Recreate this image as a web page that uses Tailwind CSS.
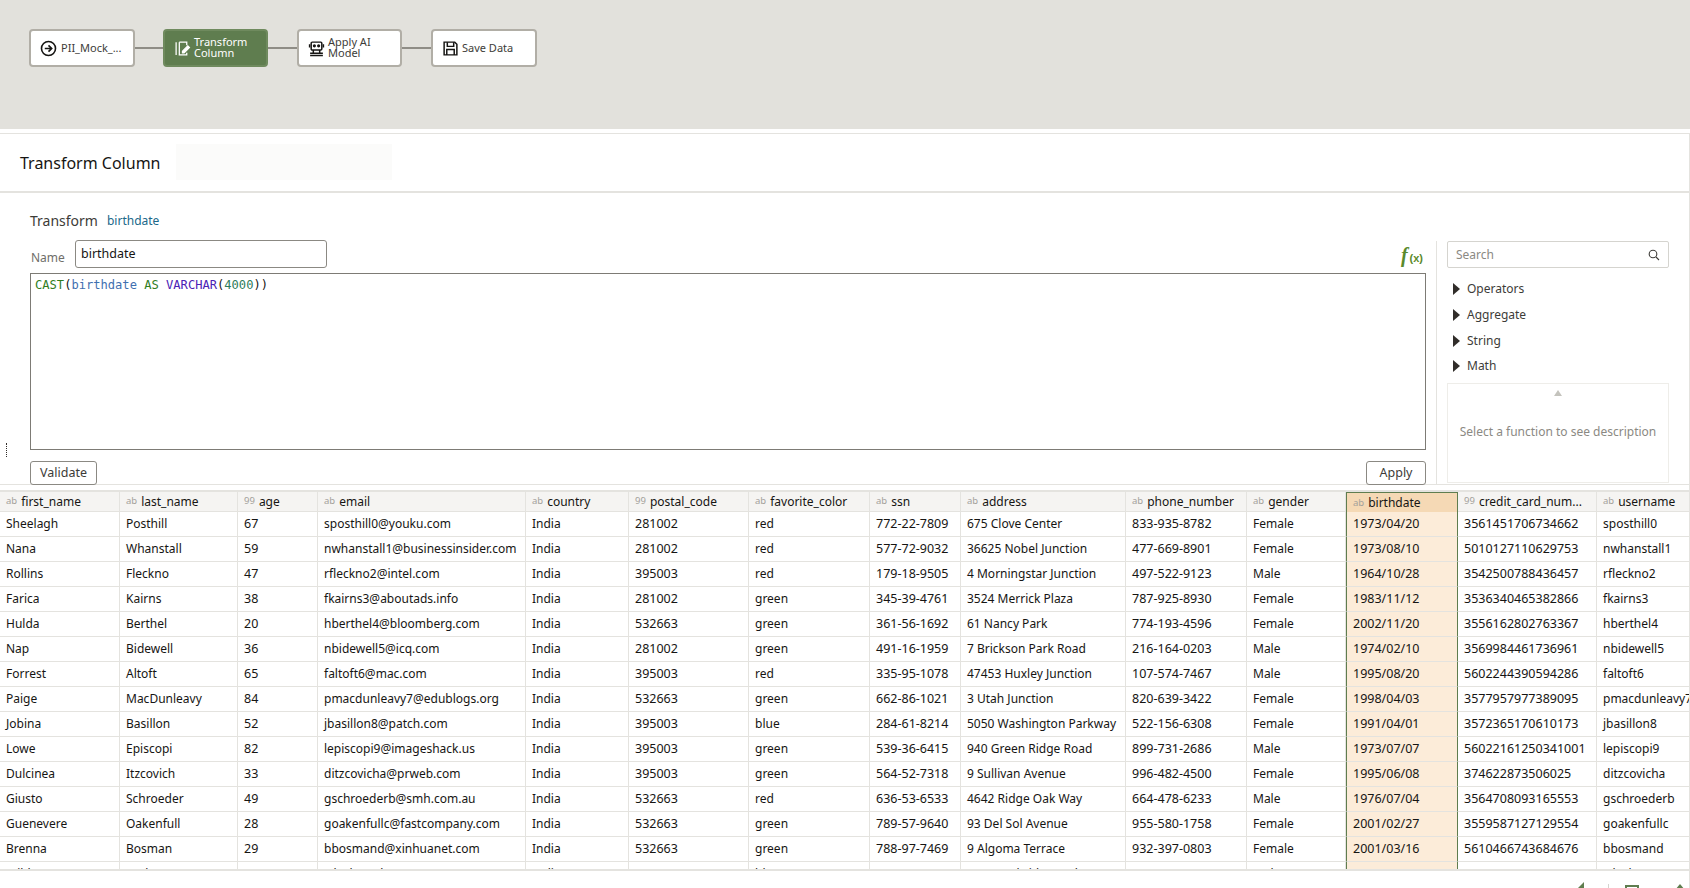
<!DOCTYPE html>
<html lang="en">
<head>
  <meta charset="UTF-8" />
  <title>Transform Column</title>
  <script src="https://cdn.jsdelivr.net/npm/@tailwindcss/browser@4"></script>
</head>
<body class="h-[888px] w-[1690px] overflow-hidden bg-white font-['Noto_Sans',sans-serif] text-[#161513]">

  <!-- Flow canvas -->
  <section class="flex h-[129px] items-start bg-[#e2e1dc] pl-[29px] pt-[29px]">
    <div class="flex h-[38px] w-[106px] items-center gap-[4px] rounded-[4px] border-2 border-[#b1aea6] bg-white pl-[9px] text-[11px] text-[#3d3c38]">
      <svg class="h-[17px] w-[17px] shrink-0" viewBox="0 0 16 16" fill="none" stroke="#161513" stroke-width="1.5"><circle cx="8" cy="8" r="6.6"/><path d="M4.5 8h6.5M8 5l3 3-3 3"/></svg>
      <span class="pt-px">PII_Mock_...</span>
    </div>
    <div class="mt-[18px] h-[2px] w-[28px] bg-[#8f8d86]"></div>
    <div class="flex h-[38px] w-[105px] items-center gap-[3px] rounded-[4px] border-2 border-[#6f8a5e] bg-[#5f7d4f] pl-[9px] text-[11px] leading-[11px] text-white">
      <svg class="h-[17px] w-[17px] shrink-0" viewBox="0 0 16 16" fill="none" stroke="#fff" stroke-width="1.2"><path d="M2 2v12M5 2h7v3M5 2v12h7v-2"/><path d="M8 10.5l5-5 1.5 1.5-5 5H8z" fill="#fff"/></svg>
      <span class="pb-[2px]">Transform<br />Column</span>
    </div>
    <div class="mt-[18px] h-[2px] w-[29px] bg-[#8f8d86]"></div>
    <div class="flex h-[38px] w-[105px] items-center gap-[3px] rounded-[4px] border-2 border-[#b1aea6] bg-white pl-[9px] text-[11px] leading-[11px] text-[#3d3c38]">
      <svg class="h-[17px] w-[17px] shrink-0" viewBox="0 0 16 16" fill="none" stroke="#161513" stroke-width="1.4"><rect x="3" y="2" width="10" height="7.5" rx="1"/><path d="M1.5 4v3M14.5 4v3M5 9.5v3h6v-3M2 14.5h12M2 12.5h12"/><circle cx="6" cy="5.5" r=".8" fill="#161513"/><circle cx="10" cy="5.5" r=".8" fill="#161513"/></svg>
      <span class="pb-[2px]">Apply AI<br />Model</span>
    </div>
    <div class="mt-[18px] h-[2px] w-[29px] bg-[#8f8d86]"></div>
    <div class="flex h-[38px] w-[106px] items-center gap-[3px] rounded-[4px] border-2 border-[#b1aea6] bg-white pl-[9px] text-[11px] text-[#3d3c38]">
      <svg class="h-[17px] w-[17px] shrink-0" viewBox="0 0 16 16" fill="none" stroke="#161513" stroke-width="1.4"><path d="M2 2h10l2 2v10H2z"/><path d="M5 2v4h6V2M4.5 14V9h7v5"/></svg>
      <span class="pt-px">Save Data</span>
    </div>
  </section>

  <!-- Panel -->
  <section class="mt-[4px] h-[755px] border-t border-r border-[#e4e3df]">
    <header class="flex h-[59px] items-center border-b-2 border-[#e4e3df] pl-[20px]">
      <h1 class="w-[156px] pt-px text-[16px]">Transform Column</h1>
      <div class="mb-[2px] h-[36px] w-[216px] bg-[#fbfbfa]"></div>
    </header>

    <div class="relative flex h-[292px] border-b border-[#e4e3df]">
      <!-- Expression editor -->
      <div class="w-[1436px] shrink-0 pl-[30px] pr-[10px]">
        <div class="flex h-[47px] items-center pt-[7px]">
          <span class="text-[14px] text-[#3d3c38]">Transform</span>
          <span class="ml-[9px] pt-px text-[12px] text-[#20688a]">birthdate</span>
        </div>
        <div class="flex h-[33px] items-start">
          <label class="mt-[9px] w-[45px] pl-[1px] text-[12px] text-[#6f6e69]">Name</label>
          <div class="flex h-[28px] w-[252px] items-center rounded-[3px] border border-[#8b8983] pl-[5px] text-[12.5px]">birthdate</div>
          <div class="ml-auto flex items-baseline pr-[3px] font-['Liberation_Serif',serif] font-bold text-[#5a8a2c]">
            <span class="pr-[2px] text-[20px] italic">f</span><span class="font-['Liberation_Sans',sans-serif] text-[11px]">(x)</span>
          </div>
        </div>
        <div class="h-[177px] border border-[#7d7b75] pl-[4px] pt-[4px] font-['DejaVu_Sans_Mono',monospace] text-[12.1px] leading-[15px]"><span class="text-[#2f7d1e]">CAST</span>(<span class="text-[#3f6fb0]">birthdate</span> <span class="text-[#2f7d1e]">AS</span> <span class="text-[#4a22b5]">VARCHAR</span>(<span class="text-[#2e7d5b]">4000</span>))</div>
        <div class="mt-[11px] flex justify-between">
          <button class="h-[24px] w-[67px] rounded-[3px] border border-[#8b8983] text-[12.5px] text-[#3d3c38]">Validate</button>
          <button class="h-[24px] w-[60px] rounded-[3px] border border-[#8b8983] text-[12.5px] text-[#3d3c38]">Apply</button>
        </div>
      </div>

      <!-- Function list -->
      <aside class="mt-[48px] h-[243px] w-[253px] border-l border-[#e4e3df] pl-[10px]">
        <div class="flex h-[27px] w-[222px] items-center justify-between rounded-[2px] border border-[#d5d4cf] pl-[8px] pr-[8px] text-[12px] text-[#8b8983]">
          <span>Search</span>
          <svg class="h-[12px] w-[12px]" viewBox="0 0 12 12" fill="none" stroke="#3d3c38" stroke-width="1.1"><circle cx="5" cy="5" r="3.8"/><path d="M8 8l3 3"/></svg>
        </div>
        <ul class="mt-[8px] text-[12px] text-[#3d3c38]">
          <li class="flex h-[26px] items-center gap-[7px] pl-[6px]"><span class="h-0 w-0 border-y-[6px] border-l-[7px] border-y-transparent border-l-[#312d2a]"></span>Operators</li>
          <li class="flex h-[26px] items-center gap-[7px] pl-[6px]"><span class="h-0 w-0 border-y-[6px] border-l-[7px] border-y-transparent border-l-[#312d2a]"></span>Aggregate</li>
          <li class="flex h-[25px] items-center gap-[7px] pl-[6px]"><span class="h-0 w-0 border-y-[6px] border-l-[7px] border-y-transparent border-l-[#312d2a]"></span>String</li>
          <li class="flex h-[26px] items-center gap-[7px] pl-[6px]"><span class="h-0 w-0 border-y-[6px] border-l-[7px] border-y-transparent border-l-[#312d2a]"></span>Math</li>
        </ul>
        <div class="mt-[4px] flex h-[100px] w-[222px] flex-col items-center border border-[#eeede9] pt-[6px] text-[12px] text-[#8b8983]">
          <span class="h-0 w-0 border-x-[4.5px] border-b-[6px] border-x-transparent border-b-[#c4c3bd]"></span>
          <span class="mt-[27px]">Select a function to see description</span>
        </div>
      </aside>
      <div class="absolute left-[6px] top-[250px] h-[14px] w-[1px] border-l border-dotted border-[#312d2a]"></div>
    </div>

    <!-- Data grid -->
    <div id="grid" class="mt-[5px] h-[381px] overflow-hidden border-y-2 border-[#e4e3df] text-[12px]"></div>
  </section>

  <!-- Status icons, clipped by the window -->
  <div class="absolute left-[1578px] top-[882px] h-0 w-0 border-b-[6px] border-l-[6px] border-b-[#5f7d4f] border-l-transparent"></div>
  <div class="absolute left-[1608px] top-[884px] h-[6px] w-[1px] bg-[#d5d4cf]"></div>
  <div class="absolute left-[1625px] top-[885px] h-[8px] w-[14px] border-2 border-[#5f7d4f]"></div>
  <div class="absolute left-[1675px] top-[884px] h-0 w-0 border-x-[5px] border-b-[6px] border-x-transparent border-b-[#5f7d4f]"></div>

  <script>
    const cols = [
      ['first_name', 'ab', 120], ['last_name', 'ab', 118], ['age', '99', 80], ['email', 'ab', 208],
      ['country', 'ab', 103], ['postal_code', '99', 120], ['favorite_color', 'ab', 121], ['ssn', 'ab', 91],
      ['address', 'ab', 165], ['phone_number', 'ab', 121], ['gender', 'ab', 99], ['birthdate', 'ab', 112],
      ['credit_card_num...', '99', 139], ['username', 'ab', 93]
    ];
    const rows = [
      ['Sheelagh','Posthill','67','sposthill0@youku.com','India','281002','red','772-22-7809','675 Clove Center','833-935-8782','Female','1973/04/20','3561451706734662','sposthill0'],
      ['Nana','Whanstall','59','nwhanstall1@businessinsider.com','India','281002','red','577-72-9032','36625 Nobel Junction','477-669-8901','Female','1973/08/10','5010127110629753','nwhanstall1'],
      ['Rollins','Fleckno','47','rfleckno2@intel.com','India','395003','red','179-18-9505','4 Morningstar Junction','497-522-9123','Male','1964/10/28','3542500788436457','rfleckno2'],
      ['Farica','Kairns','38','fkairns3@aboutads.info','India','281002','green','345-39-4761','3524 Merrick Plaza','787-925-8930','Female','1983/11/12','3536340465382866','fkairns3'],
      ['Hulda','Berthel','20','hberthel4@bloomberg.com','India','532663','green','361-56-1692','61 Nancy Park','774-193-4596','Female','2002/11/20','3556162802763367','hberthel4'],
      ['Nap','Bidewell','36','nbidewell5@icq.com','India','281002','green','491-16-1959','7 Brickson Park Road','216-164-0203','Male','1974/02/10','3569984461736961','nbidewell5'],
      ['Forrest','Altoft','65','faltoft6@mac.com','India','395003','red','335-95-1078','47453 Huxley Junction','107-574-7467','Male','1995/08/20','5602244390594286','faltoft6'],
      ['Paige','MacDunleavy','84','pmacdunleavy7@edublogs.org','India','532663','green','662-86-1021','3 Utah Junction','820-639-3422','Female','1998/04/03','3577957977389095','pmacdunleavy7'],
      ['Jobina','Basillon','52','jbasillon8@patch.com','India','395003','blue','284-61-8214','5050 Washington Parkway','522-156-6308','Female','1991/04/01','3572365170610173','jbasillon8'],
      ['Lowe','Episcopi','82','lepiscopi9@imageshack.us','India','395003','green','539-36-6415','940 Green Ridge Road','899-731-2686','Male','1973/07/07','56022161250341001','lepiscopi9'],
      ['Dulcinea','Itzcovich','33','ditzcovicha@prweb.com','India','395003','green','564-52-7318','9 Sullivan Avenue','996-482-4500','Female','1995/06/08','374622873506025','ditzcovicha'],
      ['Giusto','Schroeder','49','gschroederb@smh.com.au','India','532663','red','636-53-6533','4642 Ridge Oak Way','664-478-6233','Male','1976/07/04','3564708093165553','gschroederb'],
      ['Guenevere','Oakenfull','28','goakenfullc@fastcompany.com','India','532663','green','789-57-9640','93 Del Sol Avenue','955-580-1758','Female','2001/02/27','3559587127129554','goakenfullc'],
      ['Brenna','Bosman','29','bbosmand@xinhuanet.com','India','532663','green','788-97-7469','9 Algoma Terrace','932-397-0803','Female','2001/03/16','5610466743684676','bbosmand'],
      ['Wilden','Lock','78','wlocke@about.me','India','395003','blue','757-39-2684','4070 Parkside Road','116-185-4178','Male','1974/09/07','6774726055578057','wlocke']
    ];

    // birthdate is the selected column: tinted cells with green side rules
    const sel = 11;
    // digit-only columns run a little wider than the text ones in the reference
    const numeric = [2, 5, 7, 9, 11, 12];
    const tmpl = cols.map(c => c[2] + 'px').join(' ');
    let html = '<div class="grid h-[20px]" style="grid-template-columns:' + tmpl + '">';
    cols.forEach((c, i) => {
      html += i === sel
        ? '<div class="flex items-center gap-[4px] overflow-hidden whitespace-nowrap border-x border-t border-[#5f7d4f] bg-[#f5d9b5] pl-[6px] pt-[1px]">'
        : '<div class="flex items-center gap-[4px] overflow-hidden whitespace-nowrap border-r border-b border-[#e4e3df] bg-[#f5f4f2] pl-[6px]">';
      html += '<span class="text-[9.5px] text-[#a3a19b]">' + c[1] + '</span><span>' + c[0] + '</span></div>';
    });
    html += '</div>';
    rows.forEach(r => {
      html += '<div class="grid h-[25px]" style="grid-template-columns:' + tmpl + '">';
      r.forEach((v, i) => {
        const size = numeric.includes(i) ? 'text-[12.5px]' : 'text-[12px]';
        html += i === sel
          ? '<div class="flex items-center overflow-hidden whitespace-nowrap border-x border-b border-x-[#5f7d4f] border-b-[#e4e3df] bg-[#fcecd9] pl-[6px] ' + size + '">' + v + '</div>'
          : '<div class="flex items-center overflow-hidden whitespace-nowrap border-r border-b border-[#e4e3df] pl-[6px] ' + size + '">' + v + '</div>';
      });
      html += '</div>';
    });
    document.getElementById('grid').innerHTML = html;
  </script>
</body>
</html>
